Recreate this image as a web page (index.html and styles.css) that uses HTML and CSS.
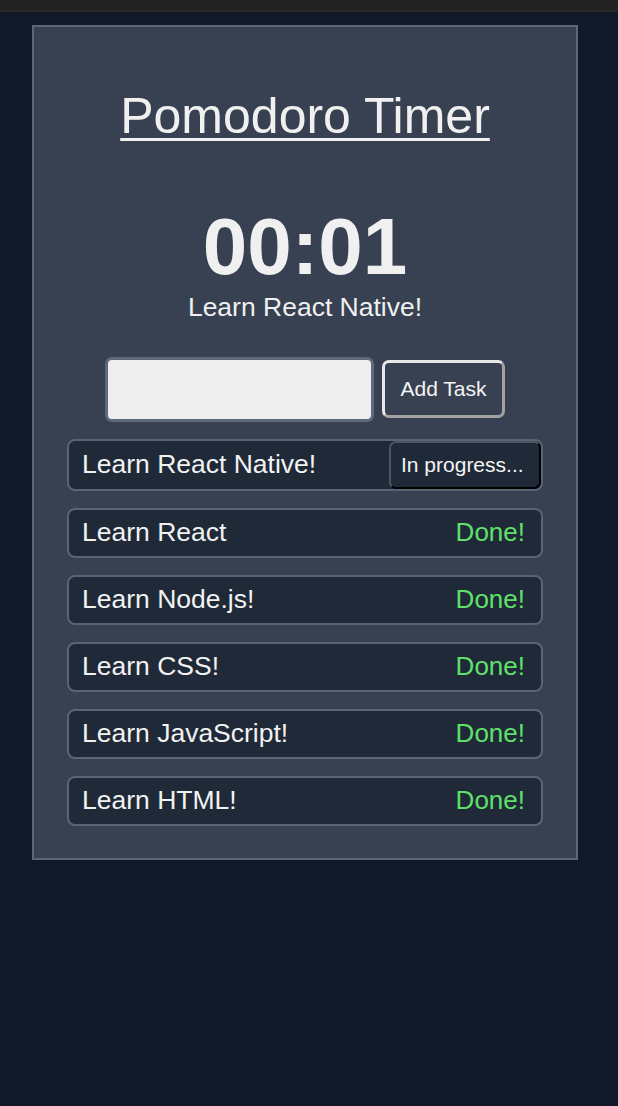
FILE: index.html
```html
<!DOCTYPE html>
<html lang="en">
<head>
<meta charset="utf-8">
<title>Pomodoro Timer</title>
<link rel="stylesheet" href="styles.css">
</head>
<body>
<div class="topbar"></div>
<main class="card">
  <h1 class="title">Pomodoro Timer</h1>
  <div class="timer">00:01</div>
  <div class="current">Learn React Native!</div>
  <form class="add-form">
    <input class="task-input" type="text">
    <button class="add-btn" type="button">Add Task</button>
  </form>
  <ul class="tasks">
    <li class="task task-active"><span class="task-name">Learn React Native!</span><button class="progress-btn" type="button">In progress...</button></li>
    <li class="task"><span class="task-name">Learn React</span><span class="done">Done!</span></li>
    <li class="task"><span class="task-name">Learn Node.js!</span><span class="done">Done!</span></li>
    <li class="task"><span class="task-name">Learn CSS!</span><span class="done">Done!</span></li>
    <li class="task"><span class="task-name">Learn JavaScript!</span><span class="done">Done!</span></li>
    <li class="task"><span class="task-name">Learn HTML!</span><span class="done">Done!</span></li>
  </ul>
</main>
</body>
</html>
```
FILE: styles.css
```css
* { box-sizing: border-box; }
html, body {
  margin: 0;
  padding: 0;
  background: #111827;
  font-family: "Liberation Sans", Arial, Helvetica, sans-serif;
  color: #f0f0f0;
  min-height: 100%;
}
.topbar {
  height: 12px;
  background: #232323;
  border-bottom: 1px solid #2b2b2b;
}
.card {
  margin: 13px 0 0 32px;
  width: 546px;
  background: #374151;
  border: 2px solid #5c6678;
  padding: 61px 0 32px;
  display: flex;
  flex-direction: column;
  align-items: center;
}
.title {
  margin: 0;
  font-size: 50px;
  font-weight: 400;
  line-height: 1.15;
  text-decoration: underline;
  text-decoration-thickness: 3px;
  text-underline-offset: 5px;
  color: #f0f0f0;
}
.timer {
  margin-top: 61px;
  font-size: 80px;
  font-weight: 700;
  line-height: 1;
  color: #f0f0f0;
}
.current {
  margin-top: 5px;
  font-size: 26.5px;
  line-height: 30px;
}
.add-form {
  margin: 35px 0 0;
  display: flex;
  align-items: center;
  gap: 8px;
}
.task-input {
  width: 269px;
  height: 65px;
  background: #eeeeee;
  border: 3px solid #5f6a7c;
  border-radius: 7px;
  font-size: 20px;
  padding: 0 10px;
}
.add-btn {
  width: 123px;
  height: 58px;
  background: #374151;
  color: #f4f4f4;
  font-family: inherit;
  font-size: 21px;
  border: 3px solid;
  border-color: #e8e8e8 #a3a3a3 #a3a3a3 #e8e8e8;
  border-radius: 7px;
  padding: 0;
}
.tasks {
  list-style: none;
  margin: 17px 0 0;
  padding: 0;
  width: 476px;
  display: flex;
  flex-direction: column;
  gap: 17px;
}
.task {
  height: 50px;
  display: flex;
  align-items: center;
  justify-content: space-between;
  background: #1f2937;
  border: 2px solid #5a6475;
  border-radius: 8px;
  padding: 0 16px 0 13px;
  font-size: 26.5px;
}
.task-active {
  height: 52px;
  padding-right: 0;
}
.task-name { color: #f2f2f2; }
.done { color: #5ee06b; font-size: 26px; }
.progress-btn {
  height: 48px;
  width: 152px;
  background: #1f2937;
  color: #f4f4f4;
  font-family: inherit;
  font-size: 21px;
  border: 2px solid;
  border-color: #4b5563 #000 #000 #4b5563;
  border-radius: 7px;
  padding: 0 0 0 10px;
  text-align: left;
}
```
